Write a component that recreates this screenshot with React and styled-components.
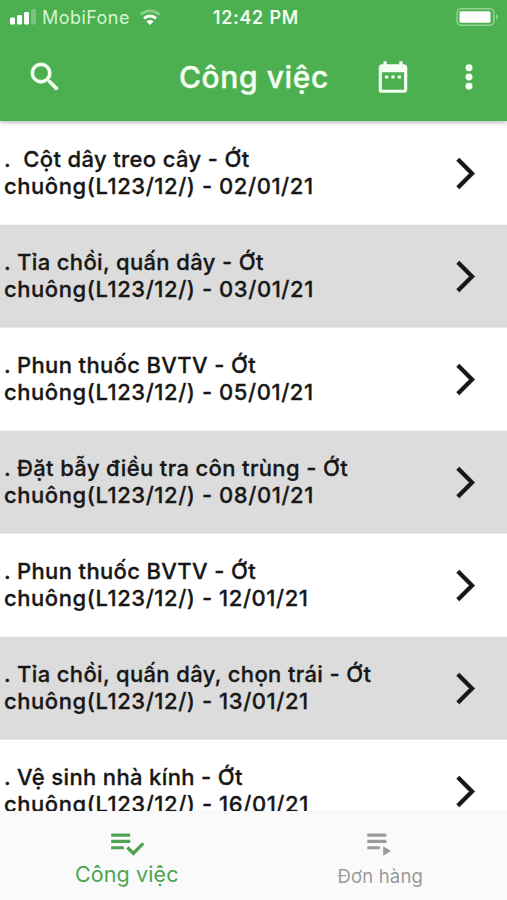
import React from "react";
import styled, { createGlobalStyle } from "styled-components";

const GlobalStyle = createGlobalStyle`
  body {
    margin: 0;
    background-color: white;
    font-family: Inter, "Noto Sans", sans-serif;
  }
`;
const Screen = styled.div`
  display: flex;
  flex-direction: column;
  width: 507px;
  height: 900px;
  overflow: hidden;
`;
const Header = styled.header`
  position: relative;
  z-index: 1;
  height: 121px;
  flex-shrink: 0;
  background-color: #4caf50;
  color: #f4fff2;
  box-shadow: 0 1px 5px rgba(0, 0, 0, 0.35);
`;
const StatusBar = styled.div`
  display: grid;
  grid-template-columns: 204px 1fr auto;
  align-items: center;
  height: 34px;
  padding: 0 8px 0 9px;
`;
const Carrier = styled.div`
  display: flex;
  align-items: center;
  font-size: 18px;
  letter-spacing: 0.45px;
  color: #d5f5d2;
`;
const SignalIcon = styled.svg`
  width: 27px;
  height: 16px;
  margin-right: 6px;
`;
const WifiIcon = styled.svg`
  width: 22px;
  height: 17px;
  margin-left: 9px;
`;
const Clock = styled.div`
  font-size: 18px;
  font-weight: 500;
  letter-spacing: 0.8px;
  white-space: nowrap;
  -webkit-text-stroke: 0.2px currentColor;
`;
const BatteryIcon = styled.svg`
  width: 43px;
  height: 18px;
`;
const Toolbar = styled.div`
  display: flex;
  align-items: center;
  height: 86px;
  padding: 0 19px 0 26px;
`;
const Title = styled.h1`
  flex: 1;
  min-width: 0;
  margin: 0 47px 0 115px;
  font-size: 30px;
  font-weight: 500;
  line-height: 36px;
  letter-spacing: 0.6px;
  white-space: nowrap;
  -webkit-text-stroke: 0.4px currentColor;
`;
const Icon = styled.svg`
  display: block;
  flex-shrink: 0;
  width: ${(props) => props.$size || 38}px;
  height: ${(props) => props.$size || 38}px;
  fill: currentColor;
`;
const MenuButton = styled.div`
  margin-left: 38px;
`;
const List = styled.main`
  flex: 1;
  min-height: 0;
  padding-top: 1px;
  overflow: hidden;
`;
const Row = styled.div`
  display: flex;
  justify-content: space-between;
  box-sizing: border-box;
  height: 103px;
  padding: 24px 23px 0 4px;
  border-bottom: 1px solid ${(props) => (props.$shaded ? "#e8e8e8" : "#f4f4f4")};
  background-color: ${(props) => (props.$shaded ? "#dcdcdc" : "white")};
  color: #171717;
`;
const RowText = styled.div`
  font-size: 22px;
  font-weight: 500;
  line-height: 27px;
  white-space: pre;
  -webkit-text-stroke: 0.3px currentColor;
`;
const TaskName = styled.div`
  letter-spacing: 0.36px;
`;
const TaskLot = styled.div`
  letter-spacing: 0.56px;
`;
const Chevron = styled(Icon)`
  margin-top: 9px;
  stroke: currentColor;
  stroke-width: 0.4;
`;
const BottomNav = styled.nav`
  display: flex;
  flex-shrink: 0;
  box-sizing: border-box;
  height: 89px;
  border-top: 1px solid #f4f4f4;
  background-color: #fafafa;
`;
const NavItem = styled.div`
  flex: 1;
  display: flex;
  flex-direction: column;
  align-items: center;
  padding-top: 12px;
  color: ${(props) => (props.$active ? "#4ea453" : "#9b9b9b")};
`;
const NavLabel = styled.div`
  margin-top: ${(props) => (props.$active ? -1 : 1)}px;
  font-size: ${(props) => (props.$active ? 21.5 : 18.5)}px;
  line-height: 26px;
  letter-spacing: ${(props) => (props.$active ? 0.1 : 0.2)}px;
`;

const tasks = [
  { name: ".  Cột dây treo cây", date: "02/01/21" },
  { name: ". Tỉa chồi, quấn dây", date: "03/01/21" },
  { name: ". Phun thuốc BVTV", date: "05/01/21" },
  { name: ". Đặt bẫy điều tra côn trùng", date: "08/01/21" },
  { name: ". Phun thuốc BVTV", date: "12/01/21" },
  { name: ". Tỉa chồi, quấn dây, chọn trái", date: "13/01/21" },
  { name: ". Vệ sinh nhà kính", date: "16/01/21" },
];

const App = () => {
  return (
    <Screen>
      <GlobalStyle />
      <Header>
        <StatusBar>
          <Carrier>
            <SignalIcon viewBox="0 0 27 16" fill="#fff">
              <rect x="1" y="8.5" width="5" height="7" rx="1.3" />
              <rect x="8" y="6" width="5" height="9.5" rx="1.3" />
              <rect x="15" y="3" width="5" height="12.5" rx="1.3" />
              <rect x="22" y="0" width="5" height="15.5" rx="1.3" opacity="0.25" />
            </SignalIcon>
            MobiFone
            <WifiIcon viewBox="0 0 22 17" fill="none" strokeWidth="2.8">
              <path d="M1.5 5.7a13.5 13.5 0 0 1 19 0" stroke="#86d286" />
              <path d="M5 9.5a8.5 8.5 0 0 1 12 0" stroke="#fff" />
              <path d="M11 16l-3.5-3.6a5 5 0 0 1 7 0z" fill="#fff" />
            </WifiIcon>
          </Carrier>
          <Clock>12:42 PM</Clock>
          <BatteryIcon viewBox="0 0 43 18">
            <rect x="1" y="0.8" width="37" height="16.4" rx="4.5" fill="none" stroke="#94d596" strokeWidth="1.4" />
            <rect x="3.5" y="3.2" width="31" height="11.6" rx="1.5" fill="#fff" />
            <path d="M40 6c2.4 1 2.4 5 0 6z" fill="#94d596" />
          </BatteryIcon>
        </StatusBar>
        <Toolbar>
          <Icon viewBox="0 0 24 24" stroke="currentColor" strokeWidth="0.3">
            <path d="M15.5 14h-.79l-.28-.27A6.471 6.471 0 0 0 16 9.5 6.5 6.5 0 1 0 9.5 16c1.61 0 3.09-.59 4.23-1.57l.27.28v.79l5 4.99L20.49 19l-4.99-5zm-6 0C7.01 14 5 11.99 5 9.5S7.01 5 9.5 5 14 7.01 14 9.5 11.99 14 9.5 14z" />
          </Icon>
          <Title>Công việc</Title>
          <Icon viewBox="0 0 24 24">
            <path d="M9 11H7v2h2v-2zm4 0h-2v2h2v-2zm4 0h-2v2h2v-2zm2-7h-1V2h-2v2H8V2H6v2H5c-1.11 0-1.99.9-1.99 2L3 20a2 2 0 0 0 2 2h14c1.1 0 2-.9 2-2V6c0-1.1-.9-2-2-2zm0 16H5V9h14v11z" />
          </Icon>
          <MenuButton>
            <Icon viewBox="0 0 24 24">
              <path d="M12 8.3a2.2 2.2 0 1 0 0-4.4 2.2 2.2 0 0 0 0 4.4zm0 1.5a2.2 2.2 0 1 0 0 4.4 2.2 2.2 0 0 0 0-4.4zm0 5.9a2.2 2.2 0 1 0 0 4.4 2.2 2.2 0 0 0 0-4.4z" />
            </Icon>
          </MenuButton>
        </Toolbar>
      </Header>
      <List>
        {tasks.map((task, index) => (
          <Row key={task.date} $shaded={index % 2 === 1}>
            <RowText>
              <TaskName>{task.name} - Ớt</TaskName>
              <TaskLot>chuông(L123/12/) - {task.date}</TaskLot>
            </RowText>
            <Chevron $size={37} viewBox="0 0 24 24">
              <path d="M6.23 20.23L8 22l10-10L8 2 6.23 3.77 14.46 12z" />
            </Chevron>
          </Row>
        ))}
      </List>
      <BottomNav>
        <NavItem $active>
          <Icon viewBox="0 0 24 24">
            <path d="M14 10H2v2h12v-2zm0-4H2v2h12V6zM2 16h8v-2H2v2zm19.5-4.5L23 13l-6.99 7-4.51-4.5L13 14l3.01 3 5.49-5.5z" />
          </Icon>
          <NavLabel $active>Công việc</NavLabel>
        </NavItem>
        <NavItem>
          <Icon viewBox="0 0 24 24">
            <path d="M4 10h12v2H4zm0-4h12v2H4zm0 8h8v2H4zm10 0v6l5-3z" />
          </Icon>
          <NavLabel>Đơn hàng</NavLabel>
        </NavItem>
      </BottomNav>
    </Screen>
  );
};
export default App;
